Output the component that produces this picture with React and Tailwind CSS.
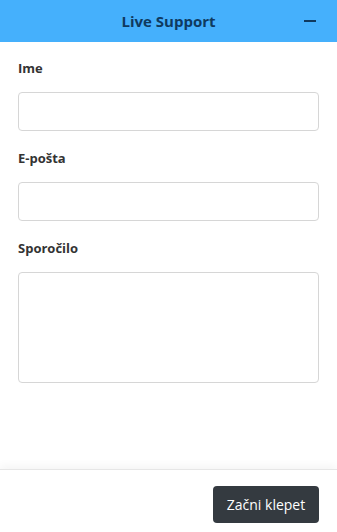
import React from 'react';

const fields = [
  { label: 'Ime', type: 'input' },
  { label: 'E-pošta', type: 'input' },
  { label: 'Sporočilo', type: 'textarea' },
];

export default function App() {
  return (
    <div className="flex h-[532px] w-full flex-col bg-white font-['Open_Sans',sans-serif] text-[#333]">
      {/* Header */}
      <div className="relative flex h-[42px] shrink-0 items-center justify-center bg-[#45b0fc]">
        <span className="text-[15px] font-bold text-[#0f3a5f]">Live Support</span>
        <button className="absolute right-[20px] top-[13px] flex h-[16px] w-[14px] items-center justify-center">
          <span className="block h-[2px] w-[12px] bg-[#0f3a5f]" />
        </button>
      </div>

      {/* Form */}
      <div className="flex flex-1 flex-col px-[18px] pt-[16px]">
        {fields.map((f, i) => (
          <div key={i} className="mb-[17px] flex flex-col">
            <label className="mb-[14px] text-[13px] font-bold leading-[20px] text-[#333]">{f.label}</label>
            {f.type === 'textarea' ? (
              <textarea className="h-[111px] resize-none rounded-[4px] border border-[#d6d6d6] bg-white outline-none" />
            ) : (
              <input className="h-[39px] rounded-[4px] border border-[#d6d6d6] bg-white outline-none" />
            )}
          </div>
        ))}
      </div>

      {/* Footer */}
      <div className="flex h-[63px] shrink-0 items-start justify-end border-t border-[#e6e6e6] px-[18px] pt-[16px] shadow-[0_-4px_8px_rgba(0,0,0,0.04)]">
        <button className="h-[37px] w-[106px] rounded-[4px] bg-[#343a40] text-[14px] text-white">Začni klepet</button>
      </div>
    </div>
  );
}
